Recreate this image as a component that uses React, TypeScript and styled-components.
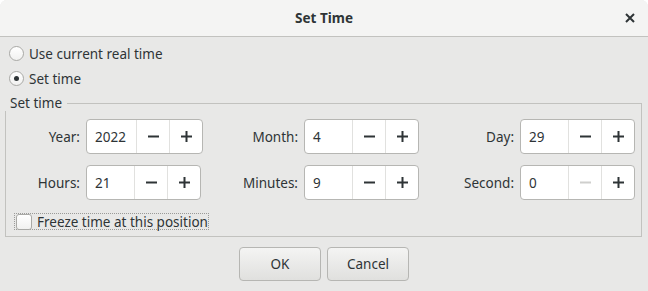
import React from 'react';
import styled, { createGlobalStyle } from 'styled-components';

const Global = createGlobalStyle`
  html, body {
    margin: 0;
    padding: 0;
    background: #ffffff;
  }
  body {
    font-family: "Noto Sans", "DejaVu Sans", sans-serif;
    font-size: 13.5px;
    color: #2e3436;
  }
`;

const Window = styled.div`
  width: 648px;
  height: 291px;
  display: flex;
  flex-direction: column;
  background: #e8e8e7;
  border-radius: 7px 7px 0 0;
  overflow: hidden;
`;

const TitleBar = styled.div`
  height: 36px;
  flex: none;
  display: flex;
  align-items: center;
  justify-content: center;
  position: relative;
  background: #f4f4f3;
  border-bottom: 1px solid #c2c2bf;
`;

const Title = styled.span`
  font-weight: 700;
  font-size: 13.5px;
  color: #2e3436;
`;

const CloseButton = styled.div`
  position: absolute;
  right: 13px;
  top: 13px;
  width: 10px;
  height: 10px;
  display: flex;
`;

const Content = styled.div`
  display: flex;
  flex-direction: column;
  padding: 4px 6px 0 5px;
`;

const RadioRow = styled.label`
  height: 25px;
  display: flex;
  align-items: center;
  gap: 5px;
  padding-left: 4px;
`;

const RadioCircle = styled.span<{ $checked?: boolean }>`
  width: 13px;
  height: 13px;
  border-radius: 50%;
  border: 1px solid #a9a9a6;
  background: linear-gradient(#ffffff, #f1f1f0);
  display: flex;
  align-items: center;
  justify-content: center;
  &::after {
    content: '';
    width: 5px;
    height: 5px;
    border-radius: 50%;
    background: #2e3436;
    display: ${(p) => (p.$checked ? 'block' : 'none')};
  }
`;

const Frame = styled.div`
  position: relative;
  display: flex;
  flex-direction: column;
  margin-top: 12px;
  border: 1px solid #c2c2bf;
  padding: 15px 5px 6px 0;
`;

const FrameLabel = styled.span`
  position: absolute;
  left: -1px;
  top: -9px;
  padding: 0 5px 0 5px;
  height: 16px;
  line-height: 16px;
  background: #e8e8e7;
`;

const Fields = styled.div`
  display: grid;
  grid-template-columns: 74px auto 89px auto 89px auto;
  column-gap: 6px;
  row-gap: 11px;
  align-items: center;
  justify-content: start;
`;

const FieldLabel = styled.span`
  text-align: right;
`;

const Spin = styled.div`
  display: flex;
  justify-self: start;
  height: 33px;
  border: 1px solid #b6b6b3;
  border-radius: 4px;
  background: #ffffff;
`;

const SpinEntry = styled.span<{ $w: number }>`
  width: ${(p) => p.$w}px;
  box-sizing: border-box;
  padding-left: 8px;
  display: flex;
  align-items: center;
  color: #2e3436;
`;

const SpinButton = styled.span<{ $disabled?: boolean }>`
  width: 32px;
  border-left: 1px solid #e1e1df;
  display: flex;
  align-items: center;
  justify-content: center;
  color: ${(p) => (p.$disabled ? '#cfcfcd' : '#2e3436')};
`;

const CheckRow = styled.label`
  display: flex;
  align-items: center;
  gap: 5px;
  align-self: flex-start;
  margin: 13px 0 0 8px;
  height: 15px;
  padding-right: 0;
  border: 1px dotted #9a9a98;
`;

const CheckBox = styled.span`
  width: 14px;
  height: 14px;
  margin-left: 1px;
  border: 1px solid #a9a9a6;
  border-radius: 3px;
  background: linear-gradient(#ffffff, #f1f1f0);
`;

const ButtonRow = styled.div`
  display: flex;
  justify-content: center;
  gap: 6px;
  margin-top: 10px;
  padding-left: 1px;
`;

const Button = styled.div`
  width: 80px;
  height: 32px;
  border: 1px solid #b6b6b3;
  border-radius: 4px;
  background: linear-gradient(#f4f4f3, #e0e0de);
  display: flex;
  align-items: center;
  justify-content: center;
  color: #2e3436;
`;

const Minus = () => (
  <svg width="11" height="11" viewBox="0 0 11 11">
    <rect x="0" y="4.5" width="11" height="2" fill="currentColor" />
  </svg>
);

const Plus = () => (
  <svg width="11" height="11" viewBox="0 0 11 11">
    <rect x="0" y="4.5" width="11" height="2" fill="currentColor" />
    <rect x="4.5" y="0" width="2" height="11" fill="currentColor" />
  </svg>
);

interface SpinProps {
  value: string;
  entry: number;
  minDisabled?: boolean;
}

function SpinField({ value, entry, minDisabled }: SpinProps) {
  return (
    <Spin>
      <SpinEntry $w={entry}>{value}</SpinEntry>
      <SpinButton $disabled={minDisabled}>
        <Minus />
      </SpinButton>
      <SpinButton>
        <Plus />
      </SpinButton>
    </Spin>
  );
}

const fields = [
  { label: 'Year:', value: '2022', entry: 49 },
  { label: 'Month:', value: '4', entry: 47 },
  { label: 'Day:', value: '29', entry: 47 },
  { label: 'Hours:', value: '21', entry: 47 },
  { label: 'Minutes:', value: '9', entry: 47 },
  { label: 'Second:', value: '0', entry: 47, minDisabled: true },
];

export default function App() {
  return (
    <>
      <Global />
      <Window>
        <TitleBar>
          <Title>Set Time</Title>
          <CloseButton>
            <svg width="10" height="10" viewBox="0 0 10 10">
              <path d="M1 1 L9 9 M9 1 L1 9" stroke="#2e3436" strokeWidth="2" />
            </svg>
          </CloseButton>
        </TitleBar>
        <Content>
          <RadioRow>
            <RadioCircle />
            Use current real time
          </RadioRow>
          <RadioRow>
            <RadioCircle $checked />
            Set time
          </RadioRow>
          <Frame>
            <FrameLabel>Set time</FrameLabel>
            <Fields>
              {fields.map((f) => (
                <React.Fragment key={f.label}>
                  <FieldLabel>{f.label}</FieldLabel>
                  <SpinField value={f.value} entry={f.entry} minDisabled={f.minDisabled} />
                </React.Fragment>
              ))}
            </Fields>
            <CheckRow>
              <CheckBox />
              Freeze time at this position
            </CheckRow>
          </Frame>
          <ButtonRow>
            <Button>OK</Button>
            <Button>Cancel</Button>
          </ButtonRow>
        </Content>
      </Window>
    </>
  );
}
